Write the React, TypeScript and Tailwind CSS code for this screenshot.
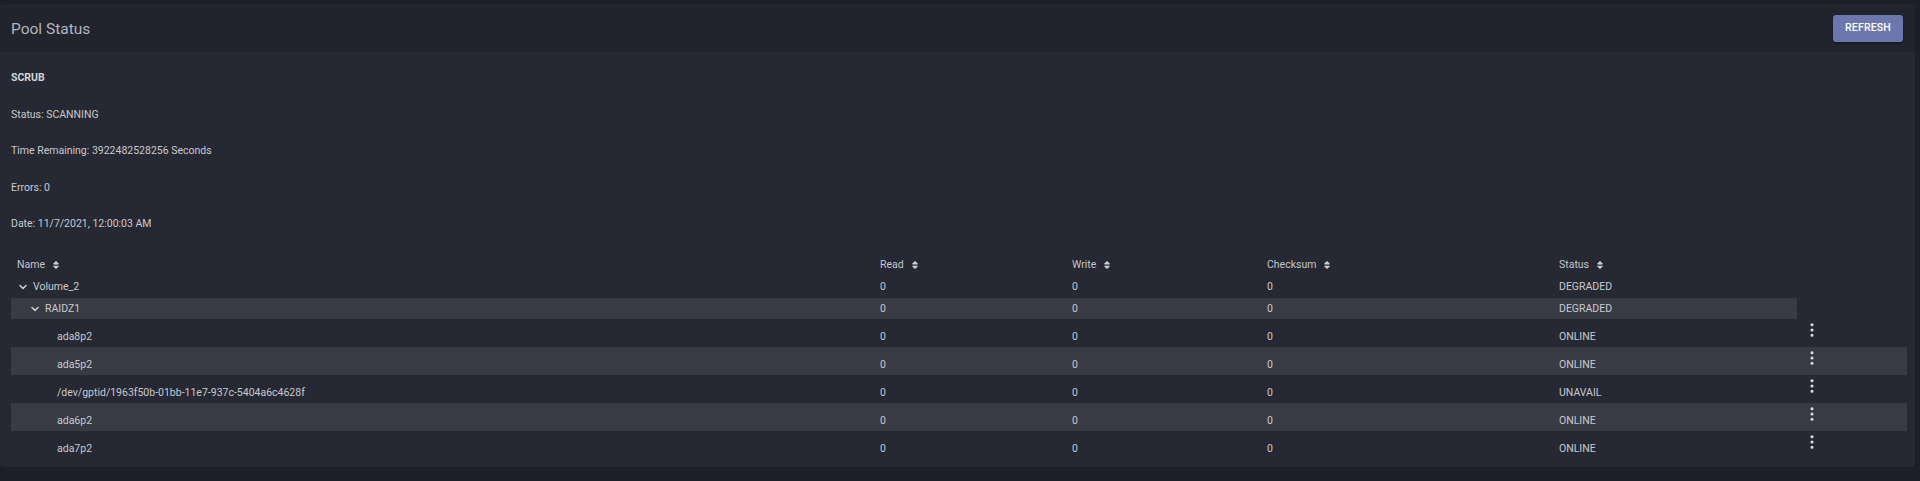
import { ChevronDown, EllipsisVertical } from "lucide-react";
import { FaSort } from "react-icons/fa";

type Row = {
  name: string;
  depth: number;
  expandable?: boolean;
  read: number;
  write: number;
  checksum: number;
  status: string;
  striped?: boolean;
  actions?: boolean;
};

const rows: Row[] = [
  { name: "Volume_2", depth: 0, expandable: true, read: 0, write: 0, checksum: 0, status: "DEGRADED" },
  { name: "RAIDZ1", depth: 1, expandable: true, read: 0, write: 0, checksum: 0, status: "DEGRADED", striped: true },
  { name: "ada8p2", depth: 2, read: 0, write: 0, checksum: 0, status: "ONLINE", actions: true },
  { name: "ada5p2", depth: 2, read: 0, write: 0, checksum: 0, status: "ONLINE", actions: true, striped: true },
  {
    name: "/dev/gptid/1963f50b-01bb-11e7-937c-5404a6c4628f",
    depth: 2,
    read: 0,
    write: 0,
    checksum: 0,
    status: "UNAVAIL",
    actions: true,
  },
  { name: "ada6p2", depth: 2, read: 0, write: 0, checksum: 0, status: "ONLINE", actions: true, striped: true },
  { name: "ada7p2", depth: 2, read: 0, write: 0, checksum: 0, status: "ONLINE", actions: true },
];

const scrub = [
  "Status: SCANNING",
  "Time Remaining: 3922482528256 Seconds",
  "Errors: 0",
  "Date: 11/7/2021, 12:00:03 AM",
];

const SortHead = ({ label, className }: { label: string; className: string }) => (
  <div className={`flex items-center gap-[6px] ${className}`}>
    <span>{label}</span>
    <FaSort size={10} className="text-[#cdcfd5]" />
  </div>
);

const Indent = ({ depth }: { depth: number }) => (
  <>
    {Array.from({ length: depth }).map((_, i) => (
      <span key={i} className="w-[12px] shrink-0" />
    ))}
  </>
);

const TreeRow = ({ row }: { row: Row }) => {
  const leaf = row.actions;
  const h = row.depth === 0 ? "h-[22px] items-center" : row.depth === 1 ? "h-[21px] items-center" : "h-[28px] items-start";
  return (
    <div className="flex">
      <div className={`flex ${h} ${leaf ? "w-[1896px]" : "w-[1786px]"} ${row.striped ? "bg-[#383a44]" : ""}`}>
        <div className={`flex w-[1786px] items-center ${leaf ? "h-[20px] mt-[8px]" : "h-full"}`}>
          <div className="flex items-center w-[869px] pl-[6px]">
            <Indent depth={row.depth} />
            {row.expandable ? (
              <ChevronDown size={12} strokeWidth={3} className="shrink-0 text-[#d0d2d8]" />
            ) : (
              <span className="w-[12px] shrink-0" />
            )}
            <span className="ml-[4px]">{row.name}</span>
          </div>
          <div className="w-[192px]">{row.read}</div>
          <div className="w-[195px]">{row.write}</div>
          <div className="w-[292px]">{row.checksum}</div>
          <div className="w-[238px]">{row.status}</div>
        </div>
        {leaf && (
          <div className="w-[110px] pl-[6px] pt-[2px]">
            <EllipsisVertical size={18} strokeWidth={2.2} className="text-[#d8dae0]" />
          </div>
        )}
      </div>
    </div>
  );
};

export default function App() {
  return (
    <div
      className="w-[1920px] h-[481px] bg-[#1c1e29] pt-[4px] pr-[5px] pb-[14px] text-[10.5px] text-[#c8cad0]"
      style={{ fontFamily: "Roboto, 'Noto Sans', Arial, sans-serif" }}
    >
      <div className="h-full rounded-[4px] bg-[#262833] overflow-hidden">
        <div className="h-[48px] bg-[#22242d] flex items-center justify-between pl-[11px] pr-[12px]">
          <h1 className="mt-[3px] text-[15.5px] text-[#b3b6be]">Pool Status</h1>
          <button className="w-[70px] h-[27px] rounded-[3px] bg-[#6b77ad] text-white text-[10.5px] font-medium tracking-[0.2px] shadow-[0_1px_2px_rgba(0,0,0,0.4)]">
            REFRESH
          </button>
        </div>

        <div className="px-[11px] pt-[16px]">
          <div className="flex flex-col gap-[16.5px]">
            <div className="h-[20px] leading-[20px] font-bold text-[#d2d4da]">SCRUB</div>
            {scrub.map((line) => (
              <div key={line} className="h-[20px] leading-[20px]">
                {line}
              </div>
            ))}
          </div>

          <div className="mt-[20px]">
            <div className="flex items-center h-[22px] text-[#c4c6cc]">
              <SortHead label="Name" className="w-[869px] pl-[6px]" />
              <SortHead label="Read" className="w-[192px]" />
              <SortHead label="Write" className="w-[195px]" />
              <SortHead label="Checksum" className="w-[292px]" />
              <SortHead label="Status" className="w-[238px]" />
            </div>
            {rows.map((row) => (
              <TreeRow key={row.name} row={row} />
            ))}
          </div>
        </div>
      </div>
    </div>
  );
}
